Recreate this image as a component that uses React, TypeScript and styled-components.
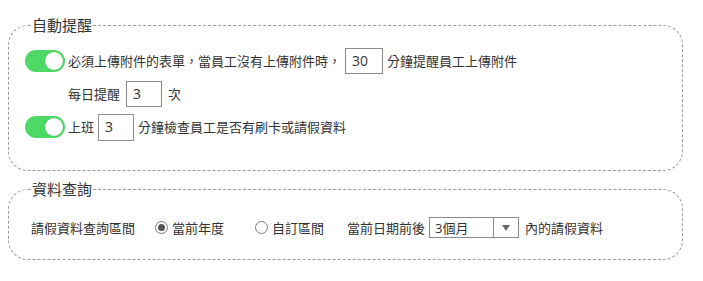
import styled, { createGlobalStyle } from 'styled-components';

const GlobalStyle = createGlobalStyle`
  body {
    margin: 0;
    background: #ffffff;
    font-family: 'Open Sans', 'Noto Sans CJK TC', sans-serif;
    color: #333333;
  }
`;

const Page = styled.div`
  display: flex;
  flex-direction: column;
  gap: 8px;
  width: 675px;
  padding: 15px 0 0 8px;
`;

const Group = styled.fieldset<{ $pad: string }>`
  margin: 0;
  padding: ${(p) => p.$pad};
  border: 1px dashed #9a9a9a;
  border-radius: 20px;
  min-width: 0;
`;

const Legend = styled.legend`
  margin-left: 6px;
  padding: 0 1px;
  font-size: 15px;
  line-height: 20px;
  color: #333333;
`;

const Rows = styled.div`
  display: flex;
  flex-direction: column;
  gap: 7px;
`;

const Row = styled.div<{ $indent?: number; $gap?: number }>`
  display: flex;
  align-items: center;
  height: 26px;
  gap: ${(p) => p.$gap ?? 4}px;
  padding-left: ${(p) => p.$indent ?? 0}px;
  font-size: 13px;
  line-height: 18px;
  white-space: nowrap;
`;

const Text = styled.span<{ $ml?: number }>`
  margin-left: ${(p) => p.$ml ?? 0}px;
`;

const Toggle = styled.span<{ $on: boolean }>`
  position: relative;
  display: inline-block;
  width: 40px;
  height: 22px;
  border-radius: 11px;
  background: ${(p) => (p.$on ? '#4cd964' : '#dddddd')};
  margin-right: -1px;
  flex-shrink: 0;

  &::after {
    content: '';
    position: absolute;
    top: 2px;
    left: ${(p) => (p.$on ? '20px' : '2px')};
    width: 18px;
    height: 18px;
    border-radius: 50%;
    background: #ffffff;
    box-shadow: 0 0 1px rgba(0, 0, 0, 0.25);
  }
`;

const NumberBox = styled.div<{ $w: number; $h?: number }>`
  box-sizing: border-box;
  width: ${(p) => p.$w}px;
  height: ${(p) => p.$h ?? 26}px;
  border: 1px solid #8a8a8a;
  padding-left: 6px;
  display: flex;
  align-items: center;
  font-size: 14px;
  color: #333333;
`;

const QueryRow = styled.div`
  display: flex;
  align-items: center;
  height: 21px;
  padding-left: 6px;
  font-size: 13px;
  line-height: 18px;
  white-space: nowrap;
`;

const Radio = styled.span<{ $checked: boolean; $ml: number }>`
  position: relative;
  box-sizing: border-box;
  width: 13px;
  height: 13px;
  border: 1px solid #7a7a7a;
  border-radius: 50%;
  margin: 0 4px 0 ${(p) => p.$ml}px;
  flex-shrink: 0;

  &::after {
    content: '';
    display: ${(p) => (p.$checked ? 'block' : 'none')};
    position: absolute;
    top: 2px;
    left: 2px;
    width: 7px;
    height: 7px;
    border-radius: 50%;
    background: #555555;
  }
`;

const Select = styled.div`
  box-sizing: border-box;
  display: flex;
  width: 90px;
  height: 21px;
  border: 1px solid #8a8a8a;
  margin: 0 6px 0 4px;
`;

const SelectValue = styled.span`
  flex: 1;
  padding-left: 5px;
  display: flex;
  align-items: center;
  font-size: 13px;
`;

const SelectArrow = styled.span`
  width: 24px;
  border-left: 1px solid #8a8a8a;
  display: flex;
  align-items: center;
  justify-content: center;

  &::before {
    content: '';
    border-left: 4px solid transparent;
    border-right: 4px solid transparent;
    border-top: 6px solid #666666;
  }
`;

export default function App() {
  return (
    <>
      <GlobalStyle />
      <Page>
        <Group $pad="13px 16px 30px 16px">
          <Legend>自動提醒</Legend>
          <Rows>
            <Row>
              <Toggle $on />
              <Text>必須上傳附件的表單，當員工沒有上傳附件時，</Text>
              <NumberBox $w={38}>30</NumberBox>
              <Text>分鐘提醒員工上傳附件</Text>
            </Row>
            <Row $indent={43} $gap={6}>
              <Text>每日提醒</Text>
              <NumberBox $w={36}>3</NumberBox>
              <Text>次</Text>
            </Row>
            <Row>
              <Toggle $on />
              <Text>上班</Text>
              <NumberBox $w={36} $h={27}>3</NumberBox>
              <Text>分鐘檢查員工是否有刷卡或請假資料</Text>
            </Row>
          </Rows>
        </Group>
        <Group $pad="18px 16px 21px 16px">
          <Legend>資料查詢</Legend>
          <QueryRow>
            <Text>請假資料查詢區間</Text>
            <Radio $checked $ml={20} />
            <Text>當前年度</Text>
            <Radio $checked={false} $ml={31} />
            <Text>自訂區間</Text>
            <Text $ml={23}>當前日期前後</Text>
            <Select>
              <SelectValue>3個月</SelectValue>
              <SelectArrow />
            </Select>
            <Text>內的請假資料</Text>
          </QueryRow>
        </Group>
      </Page>
    </>
  );
}
